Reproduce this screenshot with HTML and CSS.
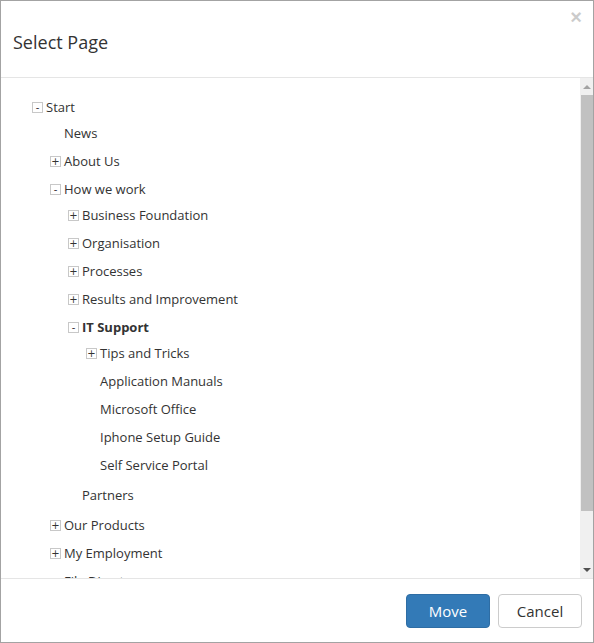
FILE: index.html
```
<!DOCTYPE html>
<html lang="en">
<head>
<meta charset="utf-8">
<title>Select Page</title>
<link rel="stylesheet" href="styles.css">
</head>
<body>
<div class="modal">
  <div class="modal-header">
    <h4 class="modal-title">Select Page</h4>
    <button class="close" type="button">&times;</button>
  </div>
  <div class="modal-body">
    <div class="tree-scroll">
      <ul class="tree">
        <li><div class="row"><span class="exp">-</span><span class="label">Start</span></div>
          <ul>
            <li><div class="row leaf"><span class="label">News</span></div></li>
            <li><div class="row"><span class="exp">+</span><span class="label">About Us</span></div></li>
            <li><div class="row"><span class="exp">-</span><span class="label">How we work</span></div>
              <ul>
                <li><div class="row"><span class="exp">+</span><span class="label">Business Foundation</span></div></li>
                <li><div class="row"><span class="exp">+</span><span class="label">Organisation</span></div></li>
                <li><div class="row"><span class="exp">+</span><span class="label">Processes</span></div></li>
                <li><div class="row"><span class="exp">+</span><span class="label">Results and Improvement</span></div></li>
                <li><div class="row"><span class="exp">-</span><span class="label bold">IT Support</span></div>
                  <ul>
                    <li><div class="row"><span class="exp">+</span><span class="label">Tips and Tricks</span></div></li>
                    <li><div class="row leaf"><span class="label">Application Manuals</span></div></li>
                    <li><div class="row leaf"><span class="label">Microsoft Office</span></div></li>
                    <li><div class="row leaf"><span class="label">Iphone Setup Guide</span></div></li>
                    <li><div class="row leaf"><span class="label">Self Service Portal</span></div></li>
                  </ul>
                </li>
                <li><div class="row leaf"><span class="label">Partners</span></div></li>
              </ul>
            </li>
            <li><div class="row"><span class="exp">+</span><span class="label">Our Products</span></div></li>
            <li><div class="row"><span class="exp">+</span><span class="label">My Employment</span></div></li>
            <li><div class="row leaf"><span class="label">File Directory</span></div></li>
          </ul>
        </li>
      </ul>
    </div>
    <div class="scrollbar">
      <div class="sb-btn"><span class="tri-up"></span></div>
      <div class="sb-track">
        <div class="sb-thumb"></div>
      </div>
      <div class="sb-btn"><span class="tri-down"></span></div>
    </div>
  </div>
  <div class="modal-footer">
    <button class="btn btn-primary" type="button">Move</button>
    <button class="btn btn-default" type="button">Cancel</button>
  </div>
</div>
</body>
</html>
```
FILE: styles.css
```
* { box-sizing: border-box; }
html, body { margin: 0; padding: 0; background: #fff; }
body {
  font-family: "Open Sans", "Liberation Sans", sans-serif;
  color: #333;
  font-size: 13px;
}
.modal {
  width: 594px;
  height: 643px;
  border: 1px solid #a3a3a3;
  display: flex;
  flex-direction: column;
  background: #fff;
}
.modal-header {
  height: 77px;
  border-bottom: 1px solid #e5e5e5;
  display: flex;
  align-items: center;
  padding: 0 12px;
  position: relative;
}
.modal-title {
  margin: 0;
  font-size: 18px;
  font-weight: 400;
  color: #333;
  line-height: 1;
  margin-top: 5px;
}
.close {
  position: absolute;
  top: 6px;
  right: 11px;
  border: 0;
  background: none;
  padding: 0;
  font-family: "Liberation Sans", sans-serif;
  font-size: 20px;
  font-weight: 700;
  line-height: 20px;
  color: #000;
  opacity: 0.2;
}
.modal-body {
  height: 500px;
  display: flex;
  overflow: hidden;
}
.tree-scroll {
  flex: 1;
  overflow: hidden;
  padding: 15px 0 0 31px;
}
.tree, .tree ul {
  list-style: none;
  margin: 0;
  padding: 0;
}
.tree ul {
  padding-left: 18px;
  margin: -2px 0 2px;
}
.row {
  height: 28px;
  display: flex;
  align-items: center;
}
.row.leaf { padding-left: 14px; }
.exp {
  width: 11px;
  height: 11px;
  border: 1px solid #c8c8c8;
  font-family: "DejaVu Sans", sans-serif;
  font-size: 10px;
  line-height: 9px;
  text-align: center;
  color: #333;
  margin-right: 3px;
  margin-top: 1px;
}
.label { white-space: nowrap; }
.bold { font-weight: 700; }
.scrollbar {
  width: 13px;
  display: flex;
  flex-direction: column;
  background: #f0f0f0;
}
.sb-btn {
  height: 17px;
  display: flex;
  align-items: center;
  justify-content: center;
}
.tri-up {
  width: 0; height: 0;
  border-left: 4px solid transparent;
  border-right: 4px solid transparent;
  border-bottom: 4px solid #a3a3a3;
}
.tri-down {
  width: 0; height: 0;
  border-left: 4px solid transparent;
  border-right: 4px solid transparent;
  border-top: 4px solid #505050;
}
.sb-track {
  flex: 1;
}
.sb-thumb {
  height: 416px;
  background: #c1c1c1;
  margin-left: 1px;
}
.modal-footer {
  flex: 1;
  border-top: 1px solid #e5e5e5;
  display: flex;
  justify-content: flex-end;
  align-items: flex-start;
  gap: 8px;
  padding: 15px 11px 0 0;
}
.btn {
  width: 84px;
  height: 34px;
  font-family: "Open Sans", "Liberation Sans", sans-serif;
  font-size: 15px;
  line-height: 20px;
  border-radius: 4px;
  border: 1px solid #ccc;
  background: #fff;
  color: #333;
  padding: 6px 0;
}
.btn-primary {
  background: #337ab7;
  border-color: #2e6da4;
  color: #fff;
}
```
